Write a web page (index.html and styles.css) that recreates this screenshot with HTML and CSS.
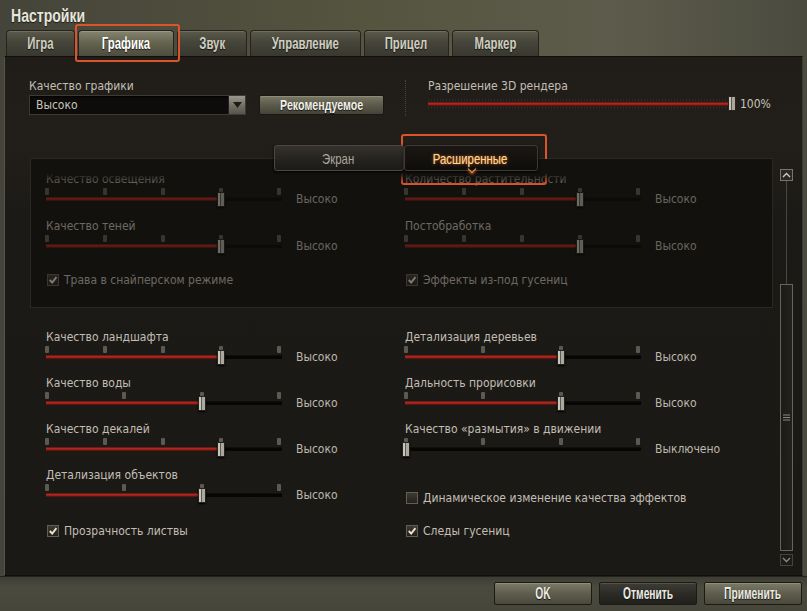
FILE: index.html
```html
<!DOCTYPE html>
<html lang="ru">
<head>
<meta charset="utf-8">
<title>Настройки</title>
<link rel="stylesheet" href="styles.css">
</head>
<body>
<div class="window">
  <div class="titlebar"><span class="nt">Настройки</span></div>
  <div class="tabs">
    <div class="tab w-igra"><span class="nt">Игра</span></div>
    <div class="tab active w-graf"><span class="nt">Графика</span></div>
    <div class="tab w-zvuk"><span class="nt">Звук</span></div>
    <div class="tab w-upr"><span class="nt">Управление</span></div>
    <div class="tab w-pric"><span class="nt">Прицел</span></div>
    <div class="tab w-mark"><span class="nt">Маркер</span></div>
  </div>

  <div class="panel">
    <div class="quality">
      <div class="q-left">
        <div class="label">Качество графики</div>
        <div class="q-controls">
          <div class="dropdown">
            <span class="dd-text">Высоко</span>
            <span class="dd-arrow"><svg width="9" height="6" viewBox="0 0 9 6"><path d="M0 0 H9 L4.5 6 Z" fill="#1c1b18"/></svg></span>
          </div>
          <div class="btn-rec"><span class="nt">Рекомендуемое</span></div>
        </div>
      </div>
      <div class="sep"></div>
      <div class="q-right">
        <div class="label">Разрешение 3D рендера</div>
        <div class="res-line">
          <div class="res-slider">
            <div class="res-hatch"></div>
            <div class="res-track"></div>
            <span class="res-thumb"></span>
          </div>
          <span class="res-value">100%</span>
        </div>
      </div>
    </div>

    <div class="subtabs">
      <div class="subtab"><span class="nt">Экран</span></div>
      <div class="subtab selected"><span class="nt">Расширенные</span></div>
    </div>

    <div class="scroll">
      <div class="scroll-content">
        <div class="dimbox">
          <div class="cols dim">
            <div class="col">
              <div class="srow">
                <div class="label">Качество освещения</div>
                <div class="sline">
                  <div class="slider">
                    <div class="track"></div>
                    <div class="rail">
                      <div class="fill" style="width:75%"></div>
                      <span class="tick" style="left:0%"></span><span class="tick" style="left:25%"></span><span class="tick" style="left:50%"></span><span class="tick" style="left:75%"></span><span class="tick" style="left:100%"></span>
                      <span class="thumb" style="left:75%"></span>
                    </div>
                  </div>
                  <span class="value">Высоко</span>
                </div>
              </div>
              <div class="srow">
                <div class="label">Качество теней</div>
                <div class="sline">
                  <div class="slider">
                    <div class="track"></div>
                    <div class="rail">
                      <div class="fill" style="width:75%"></div>
                      <span class="tick" style="left:0%"></span><span class="tick" style="left:25%"></span><span class="tick" style="left:50%"></span><span class="tick" style="left:75%"></span><span class="tick" style="left:100%"></span>
                      <span class="thumb" style="left:75%"></span>
                    </div>
                  </div>
                  <span class="value">Высоко</span>
                </div>
              </div>
              <div class="check crow-top">
                <span class="box"><svg width="10" height="10" viewBox="0 0 10 10"><path d="M1.8 5 L4.2 7.6 L8.4 2.2" stroke="#efe4cc" stroke-width="1.9" fill="none"/></svg></span>
                <span class="clabel">Трава в снайперском режиме</span>
              </div>
            </div>
            <div class="col">
              <div class="srow">
                <div class="label">Количество растительности</div>
                <div class="sline">
                  <div class="slider">
                    <div class="track"></div>
                    <div class="rail">
                      <div class="fill" style="width:75%"></div>
                      <span class="tick" style="left:0%"></span><span class="tick" style="left:25%"></span><span class="tick" style="left:50%"></span><span class="tick" style="left:75%"></span><span class="tick" style="left:100%"></span>
                      <span class="thumb" style="left:75%"></span>
                    </div>
                  </div>
                  <span class="value">Высоко</span>
                </div>
              </div>
              <div class="srow">
                <div class="label">Постобработка</div>
                <div class="sline">
                  <div class="slider">
                    <div class="track"></div>
                    <div class="rail">
                      <div class="fill" style="width:75%"></div>
                      <span class="tick" style="left:0%"></span><span class="tick" style="left:25%"></span><span class="tick" style="left:50%"></span><span class="tick" style="left:75%"></span><span class="tick" style="left:100%"></span>
                      <span class="thumb" style="left:75%"></span>
                    </div>
                  </div>
                  <span class="value">Высоко</span>
                </div>
              </div>
              <div class="check crow-top">
                <span class="box"><svg width="10" height="10" viewBox="0 0 10 10"><path d="M1.8 5 L4.2 7.6 L8.4 2.2" stroke="#efe4cc" stroke-width="1.9" fill="none"/></svg></span>
                <span class="clabel">Эффекты из-под гусениц</span>
              </div>
            </div>
          </div>
        </div>

        <div class="cols lower">
          <div class="col">
            <div class="srow low">
              <div class="label">Качество ландшафта</div>
              <div class="sline">
                <div class="slider">
                  <div class="track"></div>
                  <div class="rail">
                    <div class="fill" style="width:75%"></div>
                    <span class="tick" style="left:0%"></span><span class="tick" style="left:25%"></span><span class="tick" style="left:50%"></span><span class="tick" style="left:75%"></span><span class="tick" style="left:100%"></span>
                    <span class="thumb" style="left:75%"></span>
                  </div>
                </div>
                <span class="value">Высоко</span>
              </div>
            </div>
            <div class="srow low">
              <div class="label">Качество воды</div>
              <div class="sline">
                <div class="slider">
                  <div class="track"></div>
                  <div class="rail">
                    <div class="fill" style="width:66.67%"></div>
                    <span class="tick" style="left:0%"></span><span class="tick" style="left:33.33%"></span><span class="tick" style="left:66.67%"></span><span class="tick" style="left:100%"></span>
                    <span class="thumb" style="left:66.67%"></span>
                  </div>
                </div>
                <span class="value">Высоко</span>
              </div>
            </div>
            <div class="srow low">
              <div class="label">Качество декалей</div>
              <div class="sline">
                <div class="slider">
                  <div class="track"></div>
                  <div class="rail">
                    <div class="fill" style="width:75%"></div>
                    <span class="tick" style="left:0%"></span><span class="tick" style="left:25%"></span><span class="tick" style="left:50%"></span><span class="tick" style="left:75%"></span><span class="tick" style="left:100%"></span>
                    <span class="thumb" style="left:75%"></span>
                  </div>
                </div>
                <span class="value">Высоко</span>
              </div>
            </div>
            <div class="srow low">
              <div class="label">Детализация объектов</div>
              <div class="sline">
                <div class="slider">
                  <div class="track"></div>
                  <div class="rail">
                    <div class="fill" style="width:66.67%"></div>
                    <span class="tick" style="left:0%"></span><span class="tick" style="left:33.33%"></span><span class="tick" style="left:66.67%"></span><span class="tick" style="left:100%"></span>
                    <span class="thumb" style="left:66.67%"></span>
                  </div>
                </div>
                <span class="value">Высоко</span>
              </div>
            </div>
            <div class="check crow-low">
              <span class="box"><svg width="10" height="10" viewBox="0 0 10 10"><path d="M1.8 5 L4.2 7.6 L8.4 2.2" stroke="#efe4cc" stroke-width="1.9" fill="none"/></svg></span>
              <span class="clabel">Прозрачность листвы</span>
            </div>
          </div>
          <div class="col">
            <div class="srow low">
              <div class="label">Детализация деревьев</div>
              <div class="sline">
                <div class="slider">
                  <div class="track"></div>
                  <div class="rail">
                    <div class="fill" style="width:66.67%"></div>
                    <span class="tick" style="left:0%"></span><span class="tick" style="left:33.33%"></span><span class="tick" style="left:66.67%"></span><span class="tick" style="left:100%"></span>
                    <span class="thumb" style="left:66.67%"></span>
                  </div>
                </div>
                <span class="value">Высоко</span>
              </div>
            </div>
            <div class="srow low">
              <div class="label">Дальность прорисовки</div>
              <div class="sline">
                <div class="slider">
                  <div class="track"></div>
                  <div class="rail">
                    <div class="fill" style="width:66.67%"></div>
                    <span class="tick" style="left:0%"></span><span class="tick" style="left:33.33%"></span><span class="tick" style="left:66.67%"></span><span class="tick" style="left:100%"></span>
                    <span class="thumb" style="left:66.67%"></span>
                  </div>
                </div>
                <span class="value">Высоко</span>
              </div>
            </div>
            <div class="srow low">
              <div class="label">Качество «размытия» в движении</div>
              <div class="sline">
                <div class="slider">
                  <div class="track"></div>
                  <div class="rail">
                    <div class="fill" style="width:0%"></div>
                    <span class="tick" style="left:0%"></span><span class="tick" style="left:33.33%"></span><span class="tick" style="left:66.67%"></span><span class="tick" style="left:100%"></span>
                    <span class="thumb" style="left:0%"></span>
                  </div>
                </div>
                <span class="value">Выключено</span>
              </div>
            </div>
            <div class="check crow-slot">
              <span class="box"></span>
              <span class="clabel">Динамическое изменение качества эффектов</span>
            </div>
            <div class="check crow-low">
              <span class="box"><svg width="10" height="10" viewBox="0 0 10 10"><path d="M1.8 5 L4.2 7.6 L8.4 2.2" stroke="#efe4cc" stroke-width="1.9" fill="none"/></svg></span>
              <span class="clabel">Следы гусениц</span>
            </div>
          </div>
        </div>
      </div>

      <div class="scrollbar">
        <div class="sb-btn"><svg width="9" height="6" viewBox="0 0 9 6"><path d="M1 5 L4.5 1.5 L8 5" stroke="#cfcbc0" stroke-width="1.4" fill="none"/></svg></div>
        <div class="sb-track">
          <div class="sb-line"></div>
          <div class="sb-thumb"><svg width="7" height="7" viewBox="0 0 7 7"><path d="M0 1 H7 M0 3.5 H7 M0 6 H7" stroke="#8c887e" stroke-width="1"/></svg></div>
        </div>
        <div class="sb-btn"><svg width="9" height="6" viewBox="0 0 9 6"><path d="M1 1 L4.5 4.5 L8 1" stroke="#8c887e" stroke-width="1.4" fill="none"/></svg></div>
      </div>
    </div>
  </div>

  <div class="footer">
    <div class="fbtn"><span class="nt">OK</span></div>
    <div class="fbtn dark"><span class="nt">Отменить</span></div>
    <div class="fbtn"><span class="nt">Применить</span></div>
  </div>

  <div class="mark mark-tab"></div>
  <div class="mark mark-sub"></div>
</div>
</body>
</html>
```
FILE: styles.css
```css
* { box-sizing: border-box; }

body {
  margin: 0;
  background: #48473b;
  font-family: "DejaVu Sans Condensed", "DejaVu Sans", sans-serif;
  font-size: 12px;
  color: #c4c0b6;
}

/* narrow display text: Arial-width face squeezed horizontally */
.nt {
  display: inline-block;
  white-space: nowrap;
  transform: scaleX(var(--sx, 0.72));
}

.window {
  position: relative;
  width: 807px;
  height: 611px;
  display: flex;
  flex-direction: column;
  overflow: hidden;
  background: linear-gradient(90deg, #45443a 0%, #55543f 45%, #5d5c4c 75%, #4a4a3f 100%);
}

.titlebar {
  height: 30px;
  padding-left: 11px;
  line-height: 31px;
  font-family: "Liberation Sans", Arial, sans-serif;
  font-weight: bold;
  font-size: 19px;
  color: #e6e6dc;
  text-shadow: 0 1px 1px #1c1b16;
  --sx: 0.74;
}

.titlebar .nt {
  transform-origin: left center;
}

.tabs {
  height: 26px;
  display: flex;
  gap: 3px;
  padding-left: 6px;
}

.tab {
  height: 26px;
  display: flex;
  align-items: center;
  justify-content: center;
  padding-top: 1px;
  border: 1px solid #24231d;
  border-bottom: none;
  border-radius: 4px 4px 0 0;
  background: linear-gradient(180deg, #5a594b 0%, #46453a 45%, #393830 100%);
  box-shadow: inset 0 1px 0 #706f5e;
  font-family: "Liberation Sans", Arial, sans-serif;
  font-weight: bold;
  font-size: 16px;
  color: #cfcec1;
  text-shadow: 0 1px 1px #15140f;
  --sx: 0.71;
}

.tab.active {
  background: linear-gradient(180deg, #85846f 0%, #66654f 45%, #4d4c3f 100%);
  box-shadow: inset 0 1px 0 #9a9982;
  color: #ffffff;
}

.w-igra { width: 69px; }
.w-graf { width: 96px; }
.w-zvuk { width: 70px; }
.w-upr { width: 111px; }
.w-pric { width: 85px; }
.w-mark { width: 87px; }

.panel {
  flex: 1;
  margin: 0 4px;
  border: 1px solid #0f0e0b;
  border-left-color: #55544a;
  border-right-color: #3c3b33;
  background: linear-gradient(180deg, #201d19 0%, #221f1b 80px, #1c1a16 160px, #1b1915 100%);
  padding-top: 22px;
}

.label {
  height: 14px;
  line-height: 14px;
  white-space: nowrap;
  color: #c2beb4;
}

.quality {
  display: flex;
  padding-left: 24px;
  height: 37px;
}

.q-left { width: 356px; }

.q-controls {
  display: flex;
  margin-top: 2px;
}

.dropdown {
  width: 217px;
  height: 20px;
  display: flex;
  align-items: center;
  justify-content: space-between;
  border: 1px solid #3d3a33;
  background: #0d0c0a;
  box-shadow: inset 0 1px 2px #000;
}

.dd-text {
  padding-left: 6px;
  color: #c8c4ba;
}

.dd-arrow {
  width: 17px;
  height: 18px;
  display: flex;
  align-items: center;
  justify-content: center;
  background: linear-gradient(180deg, #9a988b 0%, #6d6b61 60%, #56544c 100%);
  border-left: 1px solid #222;
}

.btn-rec {
  margin-left: 13px;
  width: 125px;
  height: 20px;
  display: flex;
  align-items: center;
  justify-content: center;
  border: 1px solid #191814;
  border-radius: 2px;
  background: linear-gradient(180deg, #7a7966 0%, #5b5a4b 50%, #444338 100%);
  box-shadow: inset 0 1px 0 #8d8c78;
  font-family: "Liberation Sans", Arial, sans-serif;
  font-weight: bold;
  font-size: 14px;
  color: #f2f0e6;
  text-shadow: 0 1px 1px #111;
  --sx: 0.76;
}

.sep {
  margin-left: 20px;
  margin-top: 1px;
  height: 36px;
  border-left: 1px dotted #48443c;
}

.q-right {
  margin-left: 22px;
}

.res-line {
  display: flex;
  align-items: center;
  margin-top: 2px;
  height: 18px;
}

.res-slider {
  position: relative;
  width: 308px;
  height: 18px;
}

.res-hatch {
  position: absolute;
  left: 0;
  right: 6px;
  top: 4px;
  height: 10px;
  background: repeating-linear-gradient(90deg, #2e2a26 0 1px, transparent 1px 3px);
  opacity: 0.8;
}

.res-track {
  position: absolute;
  left: 0;
  right: 4px;
  top: 7px;
  height: 4px;
  background: linear-gradient(180deg, #4a1410 0%, #c42a20 45%, #8a1c16 70%, #3a100c 100%);
}

.res-thumb {
  position: absolute;
  right: 0;
  top: 1px;
  width: 8px;
  height: 15px;
  border: 1px solid #26241f;
  background: linear-gradient(90deg, #c7c3b8 0 35%, #5c5852 35% 55%, #aaa69c 55% 100%);
}

.res-value {
  margin-left: 4px;
  color: #c8c4ba;
}

.subtabs {
  position: relative;
  z-index: 2;
  display: flex;
  justify-content: center;
  padding-left: 4px;
  margin-top: 29px;
  margin-bottom: -13px;
  height: 26px;
}

.subtab {
  position: relative;
  height: 26px;
  display: flex;
  align-items: center;
  justify-content: center;
  border: 1px solid #4b4840;
  border-radius: 3px;
  background: linear-gradient(180deg, #34312c 0%, #24221e 60%, #1b1a17 100%);
  box-shadow: 0 1px 3px #000;
  font-family: "Liberation Sans", Arial, sans-serif;
  font-size: 15px;
  color: #aaa69c;
  width: 130px;
  --sx: 0.76;
}

.subtab.selected {
  width: 134px;
  background: linear-gradient(180deg, #1a1714 0%, #0f0d0b 100%);
  border-color: #3e3a33;
  color: #f6d59a;
  text-shadow: 0 0 4px #b4561c, 0 0 1px #d9802a;
}

.subtab.selected::after {
  content: "";
  position: absolute;
  left: 64px;
  bottom: -2px;
  width: 5px;
  height: 5px;
  border-right: 1.5px solid #f2a85a;
  border-bottom: 1.5px solid #f2a85a;
  transform: rotate(45deg);
  box-shadow: 1px 1px 3px #c0501c;
}

.scroll {
  display: flex;
  margin-left: 25px;
  height: 413px;
}

.scroll-content {
  width: 745px;
}

.dimbox {
  position: relative;
  width: 743px;
  height: 150px;
  border: 1px solid #2b2823;
  background: #13110e;
  padding-top: 13px;
}

.dimbox::before {
  content: "";
  position: absolute;
  left: 0;
  right: 0;
  top: 0;
  height: 25px;
  z-index: 1;
  background: linear-gradient(180deg, #13110e 55%, rgba(19, 17, 14, 0.3) 85%, rgba(19, 17, 14, 0) 100%);
}

.cols {
  display: grid;
  grid-template-columns: 359px 1fr;
}

.dimbox .cols {
  padding-left: 15px;
}

.dim {
  opacity: 0.5;
}

.lower {
  padding-left: 16px;
  margin-top: 22px;
}

.col {
  display: flex;
  flex-direction: column;
}

.srow {
  height: 47px;
}

.srow.low {
  height: 46px;
}

.sline {
  display: flex;
  align-items: flex-start;
}

.slider {
  position: relative;
  width: 236px;
  height: 26px;
}

.track {
  position: absolute;
  left: 0;
  right: 0;
  top: 11px;
  height: 4px;
  background: #070605;
  border-top: 1px solid #100e0c;
}

.rail {
  position: absolute;
  left: 1px;
  right: 3px;
  top: 0;
  bottom: 0;
}

.fill {
  position: absolute;
  left: -1px;
  top: 11px;
  height: 4px;
  background: linear-gradient(180deg, #4a1410 0%, #c42a20 45%, #8a1c16 70%, #3a100c 100%);
}

.tick {
  position: absolute;
  top: 2px;
  width: 4px;
  height: 7px;
  margin-left: -2px;
  border-radius: 1px;
  background: #5c5953;
}

.thumb {
  position: absolute;
  top: 6px;
  width: 8px;
  height: 15px;
  margin-left: -4px;
  border: 1px solid #24221e;
  background: linear-gradient(90deg, #c9c5ba 0 35%, #5c5852 35% 55%, #aca89e 55% 100%);
  box-shadow: 0 1px 2px #000;
}

.value {
  margin-left: 14px;
  margin-top: 6px;
  line-height: 14px;
  color: #bcb8ae;
  white-space: nowrap;
}

.check {
  display: flex;
  align-items: center;
  gap: 5px;
  padding-left: 1px;
}

.crow-top { height: 28px; }
.crow-low { height: 34px; }
.crow-slot { height: 46px; padding-top: 14px; align-items: center; }

.box {
  width: 12px;
  height: 12px;
  display: flex;
  align-items: center;
  justify-content: center;
  border: 1px solid #625e55;
  background: linear-gradient(180deg, #3e3a33 0%, #24211d 100%);
}

.clabel {
  line-height: 14px;
  color: #c2beb4;
  white-space: nowrap;
}

.scrollbar {
  margin-left: 5px;
  margin-top: 11px;
  width: 13px;
  height: 397px;
  display: flex;
  flex-direction: column;
}

.sb-btn {
  width: 13px;
  height: 12px;
  display: flex;
  align-items: center;
  justify-content: center;
  border: 1px solid #77746a;
  background: #2a2823;
}

.sb-btn:last-child {
  border-color: #45433c;
  background: #1e1c18;
}

.sb-track {
  flex: 1;
  display: flex;
  flex-direction: column;
}

.sb-line {
  height: 103px;
  width: 1px;
  margin-left: 6px;
  background: #4a4740;
}

.sb-thumb {
  flex: 1;
  margin-bottom: 3px;
  border: 1px solid #67645b;
  display: flex;
  align-items: center;
  justify-content: center;
  background: linear-gradient(90deg, #1d1b17, #24221d);
}

.footer {
  height: 35px;
  display: flex;
  justify-content: flex-end;
  align-items: flex-start;
  gap: 7px;
  padding-top: 5px;
  padding-right: 5px;
  background: linear-gradient(180deg, #3e3d33 0%, #4b4a3e 30%, #47463b 100%);
  border-top: 1px solid #23221c;
}

.fbtn {
  width: 98px;
  height: 23px;
  display: flex;
  align-items: center;
  justify-content: center;
  border: 1px solid #1b1a15;
  border-radius: 2px;
  background: linear-gradient(180deg, #7b7a67 0%, #5f5e4e 50%, #49483c 100%);
  box-shadow: inset 0 1px 0 #908f7a;
  font-family: "Liberation Sans", Arial, sans-serif;
  font-weight: bold;
  font-size: 16px;
  color: #ecebe2;
  text-shadow: 0 1px 1px #111;
  --sx: 0.64;
}

.fbtn.dark {
  background: linear-gradient(180deg, #3e3c35 0%, #2c2a25 55%, #22201c 100%);
  box-shadow: inset 0 1px 0 #55534a;
}

.mark {
  position: absolute;
  border: 2px solid #dc5429;
  border-radius: 3px;
  pointer-events: none;
}

.mark-tab {
  left: 75px;
  top: 24px;
  width: 105px;
  height: 38px;
}

.mark-sub {
  left: 401px;
  top: 134px;
  width: 146px;
  height: 51px;
}
```
